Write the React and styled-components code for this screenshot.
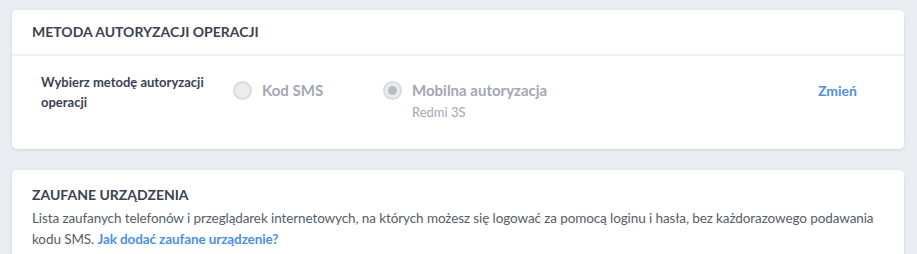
import React from "react";
import styled, { createGlobalStyle } from "styled-components";

const Global = createGlobalStyle`
  html, body { margin: 0; padding: 0; background: #e9edf2; overflow: hidden; }
  body { font-family: Lato, "Noto Sans", sans-serif; color: #3a4250; }
  * { box-sizing: border-box; }
`;

const Page = styled.div`
  display: flex;
  flex-direction: column;
  gap: 21px;
  padding: 10px 13px 0 12px;
`;

const Card = styled.section`
  background: #fff;
  border-radius: 5px;
  box-shadow: 0 1px 3px rgba(40, 60, 90, 0.12);
`;

const CardHeader = styled.div`
  padding: 0 20px;
  height: 46px;
  display: flex;
  align-items: center;
  border-bottom: 2px solid #eef1f5;
`;

const Title = styled.h2`
  margin: 0;
  font-size: 14px;
  line-height: 18px;
  font-weight: 700;
  color: #3b4251;
`;

const Row = styled.div`
  display: grid;
  grid-template-columns: 192px 150px 1fr auto;
  align-items: start;
  padding: 16px 47px 28px 29px;
`;

const Label = styled.div`
  font-size: 13px;
  font-weight: 700;
  line-height: 20px;
  color: #3b4251;
`;

const Option = styled.div`
  display: flex;
  gap: 10px;
  align-items: flex-start;
  padding-top: 9px;
`;

const Radio = styled.span`
  width: 19px;
  height: 19px;
  border-radius: 50%;
  border: 2px solid #d9dcdf;
  background: #ececec;
  display: flex;
  align-items: center;
  justify-content: center;
  flex-shrink: 0;
  &::after {
    content: "";
    display: ${(p) => (p.$checked ? "block" : "none")};
    width: 9px;
    height: 9px;
    border-radius: 50%;
    background: #b7babf;
  }
`;

const OptionText = styled.div`
  display: flex;
  flex-direction: column;
`;

const OptionLabel = styled.span`
  font-size: 15px;
  font-weight: 700;
  color: #a3a8b0;
  line-height: 19px;
`;

const OptionSub = styled.span`
  font-size: 13px;
  color: #a3a8b0;
  line-height: 18px;
  margin-top: 3px;
`;

const Action = styled.a`
  color: #4a90e8;
  font-weight: 700;
  font-size: 14px;
  line-height: 19px;
  text-decoration: none;
  padding-top: 9px;
`;

const InlineLink = styled.a`
  color: #4a90e8;
  font-weight: 700;
  text-decoration: none;
`;

const Body = styled.div`
  padding: 16px 10px 10px 20px;
  display: flex;
  flex-direction: column;
  gap: 4px;
`;

const Desc = styled.p`
  margin: 0;
  font-size: 13.5px;
  line-height: 21px;
  letter-spacing: -0.1px;
  color: #565d69;
`;

export default function App() {
  return (
    <>
      <Global />
      <Page>
        <Card>
          <CardHeader>
            <Title>METODA AUTORYZACJI OPERACJI</Title>
          </CardHeader>
          <Row>
            <Label>Wybierz metodę autoryzacji operacji</Label>
            <Option>
              <Radio />
              <OptionText>
                <OptionLabel>Kod SMS</OptionLabel>
              </OptionText>
            </Option>
            <Option>
              <Radio $checked />
              <OptionText>
                <OptionLabel>Mobilna autoryzacja</OptionLabel>
                <OptionSub>Redmi 3S</OptionSub>
              </OptionText>
            </Option>
            <Action href="#">Zmień</Action>
          </Row>
        </Card>
        <Card>
          <Body>
            <Title>ZAUFANE URZĄDZENIA</Title>
            <Desc>
              Lista zaufanych telefonów i przeglądarek internetowych, na których możesz się logować za pomocą loginu i hasła, bez każdorazowego podawania kodu SMS.{" "}
              <InlineLink href="#">Jak dodać zaufane urządzenie?</InlineLink>
            </Desc>
          </Body>
        </Card>
      </Page>
    </>
  );
}
